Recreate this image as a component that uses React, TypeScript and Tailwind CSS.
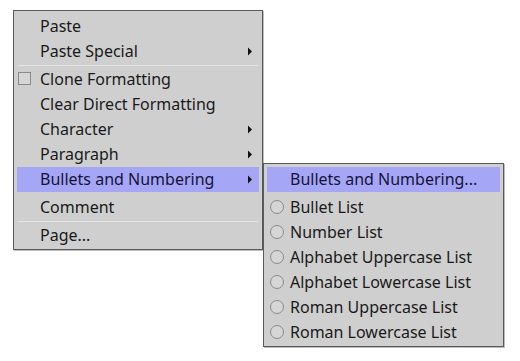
import React from "react";

const font = { fontFamily: '"Noto Sans", "Open Sans", sans-serif' };

function Arrow() {
  return (
    <svg width="4" height="9" viewBox="0 0 4 9" className="absolute right-[7px] top-[8px]">
      <path d="M0 0.5 L4 4.5 L0 8.5 Z" fill="#111" />
    </svg>
  );
}

function Row({
  label,
  arrow,
  hl,
  check,
  radio,
}: {
  label: string;
  arrow?: boolean;
  hl?: boolean;
  check?: boolean;
  radio?: boolean;
}) {
  return (
    <div
      className={
        "relative h-[25px] flex items-center pl-[23px] mx-[3px] text-[16px] leading-none " +
        (hl ? "bg-[#a6a6f7] text-[#14143a]" : "text-[#1a1a1a]")
      }
    >
      {check && (
        <div className="absolute left-[1px] top-[5px] w-[13px] h-[13px] border border-[#8a8a8a] bg-[#d6d6d6]" />
      )}
      {radio && (
        <div className="absolute left-[3px] top-[5px] w-[14px] h-[14px] rounded-full border border-[#8a8a8a] bg-[#d6d6d6]" />
      )}
      <span className="whitespace-nowrap -mt-[1px]">{label}</span>
      {arrow && <Arrow />}
    </div>
  );
}

function Sep() {
  return (
    <div className="h-[3px] flex items-center mx-[4px]">
      <div className="h-px w-full bg-[#e4e4e4]" />
    </div>
  );
}

export default function App() {
  return (
    <div className="relative w-[520px] h-[361px] bg-white" style={font}>
      <div className="absolute left-[13px] top-[10px] w-[250px] h-[240px] border border-[#5a5a5a] bg-[#cfcfcf] pt-[3px] shadow-[1px_1px_0_#bdbdbd]">
        <Row label="Paste" />
        <Row label="Paste Special" arrow />
        <Sep />
        <Row label="Clone Formatting" check />
        <Row label="Clear Direct Formatting" />
        <Row label="Character" arrow />
        <Row label="Paragraph" arrow />
        <Row label="Bullets and Numbering" arrow hl />
        <div className="h-[3px]" />
        <Row label="Comment" />
        <Sep />
        <Row label="Page..." />
      </div>
      <div className="absolute left-[263px] top-[163px] w-[241px] h-[184px] border border-[#5a5a5a] bg-[#cfcfcf] pt-[3px] shadow-[1px_1px_0_#bdbdbd]">
        <Row label="Bullets and Numbering..." hl />
        <div className="h-[3px]" />
        <Row label="Bullet List" radio />
        <Row label="Number List" radio />
        <Row label="Alphabet Uppercase List" radio />
        <Row label="Alphabet Lowercase List" radio />
        <Row label="Roman Uppercase List" radio />
        <Row label="Roman Lowercase List" radio />
      </div>
    </div>
  );
}
